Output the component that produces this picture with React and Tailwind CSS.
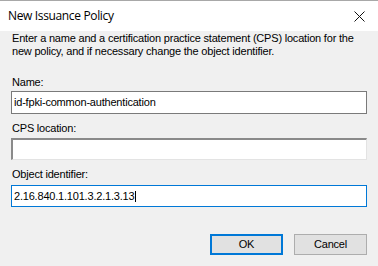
import React from "react";

export default function App() {
  return (
    <div className="w-[378px] h-[266px] bg-[#f0f0f0] flex flex-col font-['Liberation_Sans',Arial,sans-serif] text-[11px] tracking-[-0.2px] text-black overflow-hidden">
      <div className="h-px bg-[#a8a8a8]" />
      <div className="h-[30px] bg-white flex items-center justify-between pl-[8px] pr-[13px]">
        <span className="font-['Open_Sans',sans-serif] text-[12px] tracking-[-0.35px] leading-none">New Issuance Policy</span>
        <svg width="11" height="11" viewBox="0 0 11 11" className="mt-[1px]">
          <path d="M0.5 0.5 L10.5 10.5 M10.5 0.5 L0.5 10.5" stroke="#111" strokeWidth="1" fill="none" />
        </svg>
      </div>
      <div className="flex flex-col px-[11px]">
        <p className="mt-[1px] pl-px leading-[13px] whitespace-nowrap">
          Enter a name and a certification practice statement (CPS) location for the
          <br />
          new policy, and if necessary change the object identifier.
        </p>
        <label className="mt-[18px] pl-px leading-[13px]">Name:</label>
        <div className="mt-[2px] h-[23px] bg-white border border-[#7a7a7a] flex items-center pl-[2px] leading-[13px]">
          id-fpki-common-authentication
        </div>
        <label className="mt-[8px] pl-px leading-[13px]">CPS location:</label>
        <div className="mt-[3px] h-[22px] bg-white border-t-2 border-l-2 border-r border-b border-t-[#8a8a8a] border-l-[#8a8a8a] border-r-[#e3e3e3] border-b-[#e3e3e3]" />
        <label className="mt-[8px] pl-px leading-[13px]">Object identifier:</label>
        <div className="mt-[4px] h-[22px] bg-white border border-[#0078d7] flex items-center pl-[2px] leading-[13px]">
          <span>2.16.840.1.101.3.2.1.3.13</span>
          <span className="w-px h-[11px] bg-black ml-px" />
        </div>
        <div className="mt-[27px] flex justify-end gap-[11px]">
          <button className="w-[73px] h-[21px] bg-[#e1e1e1] border-2 border-[#0078d7] flex items-center justify-center leading-none">
            OK
          </button>
          <button className="w-[73px] h-[21px] bg-[#e1e1e1] border border-[#adadad] flex items-center justify-center leading-none">
            Cancel
          </button>
        </div>
      </div>
    </div>
  );
}
